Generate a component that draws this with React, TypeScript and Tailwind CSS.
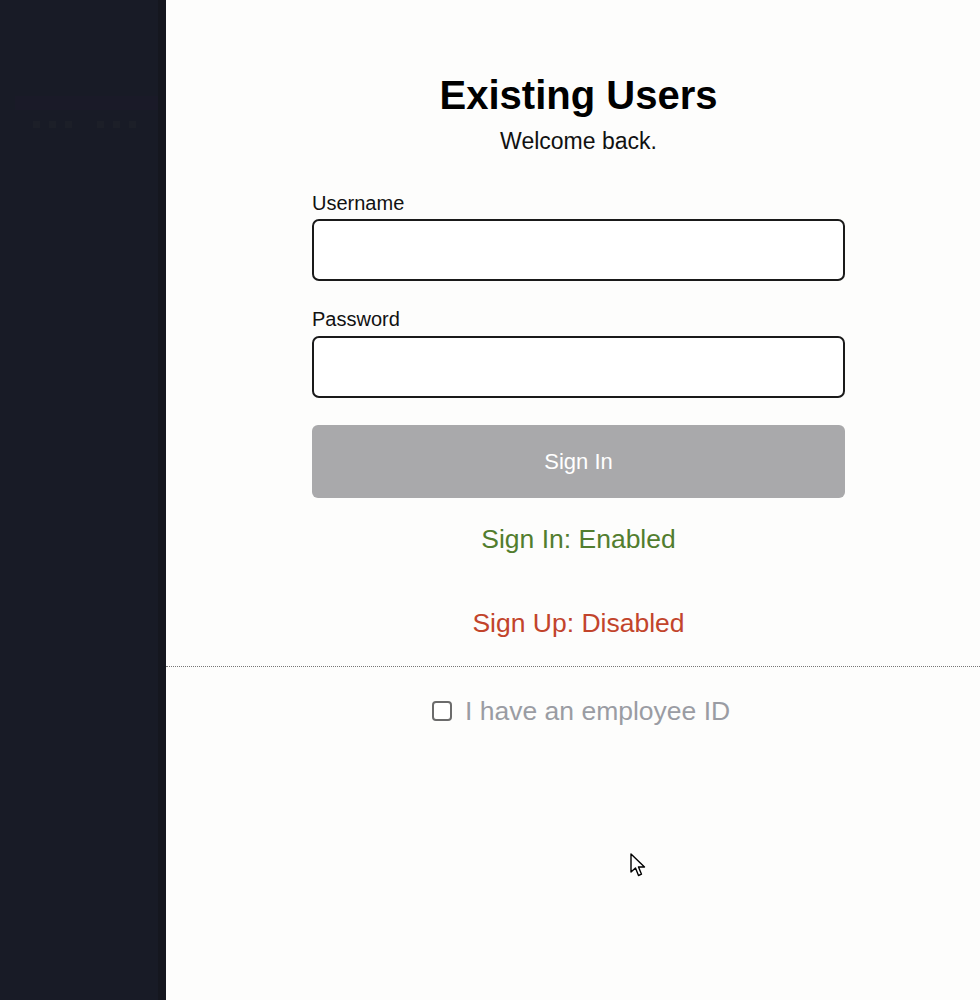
import React from "react";

export default function App() {
  return (
    <div
      className="relative flex h-[1000px] w-[980px] overflow-hidden bg-[#fdfdfc]"
      style={{ fontFamily: '"Liberation Sans", Arial, sans-serif' }}
    >
      <aside className="flex h-full w-[166px] shrink-0 bg-[#181b26]">
        <div className="flex-1 pt-[96px]">
          <div className="ml-[15px] h-[14px] w-[143px] bg-[#1a1a28]" />
          <div className="ml-[33px] mt-[11px] flex gap-[9px]">
            <div className="h-[7px] w-[7px] bg-[#1c1f28]" />
            <div className="h-[7px] w-[7px] bg-[#1c1f28]" />
            <div className="h-[7px] w-[7px] bg-[#1c1f28]" />
            <div className="ml-[16px] h-[7px] w-[7px] bg-[#1c1f28]" />
            <div className="h-[7px] w-[7px] bg-[#1c1f28]" />
            <div className="h-[7px] w-[7px] bg-[#1c1f28]" />
          </div>
        </div>
        <div className="h-full w-[8px] bg-[#15171f]" />
      </aside>

      <main className="flex flex-1 flex-col pt-[75px]">
        <div className="ml-[146px] flex w-[533px] flex-col">
          <h1 className="text-center text-[40px] font-bold leading-[40px] text-black">
            Existing Users
          </h1>
          <p className="mt-[14px] text-center text-[23px] leading-[24px] text-[#111]">
            Welcome back.
          </p>

          <label className="mt-[40px] text-[20px] leading-[20px] text-[#111]">
            Username
          </label>
          <input
            type="text"
            className="mt-[6px] h-[62px] w-full rounded-[7px] border-2 border-[#1a1a1a] bg-white px-3 outline-none"
          />

          <label className="mt-[28px] text-[20px] leading-[20px] text-[#111]">
            Password
          </label>
          <input
            type="password"
            className="mt-[7px] h-[62px] w-full rounded-[7px] border-2 border-[#1a1a1a] bg-white px-3 outline-none"
          />

          <button
            type="button"
            className="mt-[27px] h-[73px] w-full rounded-[6px] bg-[#a9a9ab] text-[22px] text-white"
          >
            Sign In
          </button>

          <p className="mt-[26px] text-center text-[26.5px] leading-[30px] text-[#527d2e]">
            Sign In: Enabled
          </p>
          <p className="mt-[54px] text-center text-[26.5px] leading-[30px] text-[#c2442b]">
            Sign Up: Disabled
          </p>
        </div>

        <div className="mt-[28px] w-full border-t border-dotted border-[#777]" />

        <div className="ml-[266px] mt-[29px] flex items-center gap-[13px]">
          <span className="block h-[20px] w-[20px] rounded-[4px] border-2 border-[#6b6b6b] bg-white" />
          <span className="text-[26.5px] leading-[30px] text-[#9a9ca3]">
            I have an employee ID
          </span>
        </div>
      </main>

      <svg
        className="absolute left-[630px] top-[853px]"
        width="18"
        height="26"
        viewBox="0 0 18 26"
      >
        <path
          d="M1 1 L1 19 L5.5 15 L8.5 22.5 L11.5 21.2 L8.5 14 L14.5 14 Z"
          fill="white"
          stroke="black"
          strokeWidth="1.4"
          strokeLinejoin="round"
        />
      </svg>
    </div>
  );
}
